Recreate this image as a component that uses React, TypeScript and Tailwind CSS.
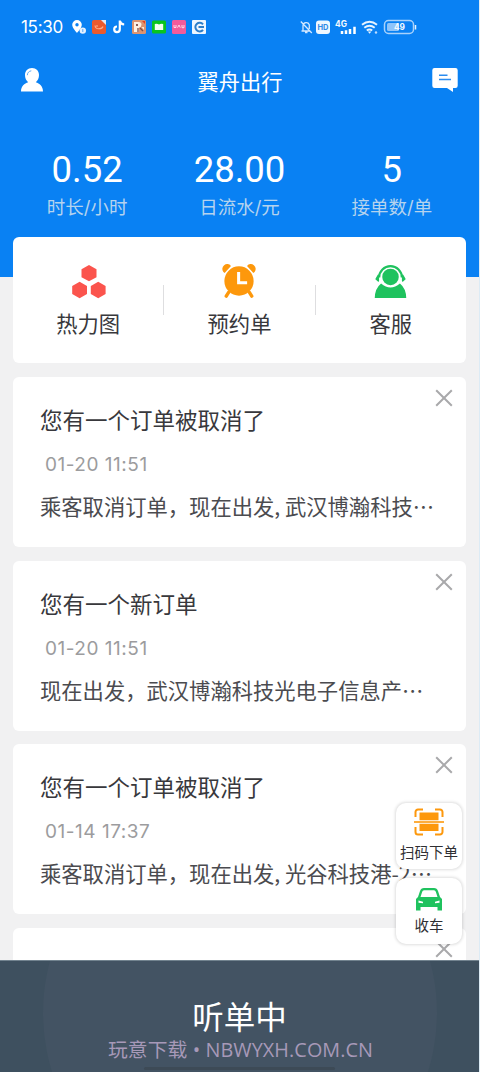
import type { ReactNode } from 'react';

interface Order {
  title: string;
  time: string;
  text: string;
}

const orders: Order[] = [
  { title: '您有一个订单被取消了', time: '01-20 11:51', text: '乘客取消订单，现在出发, 武汉博瀚科技…' },
  { title: '您有一个新订单', time: '01-20 11:51', text: '现在出发，武汉博瀚科技光电子信息产…' },
  { title: '您有一个订单被取消了', time: '01-14 17:37', text: '乘客取消订单，现在出发, 光谷科技港-2…' },
];

const stats = [
  { value: '0.52', label: '时长/小时' },
  { value: '28.00', label: '日流水/元' },
  { value: '5', label: '接单数/单' },
];

function StatusBar() {
  return (
    <div className="flex h-[54px] items-center pl-[21px] pr-[62px] text-white">
      <span className="w-[51px] text-[17px] leading-5 tracking-[-0.3px]">15:30</span>
      <div className="flex items-center gap-[6px]">
        {/* Location */}
        <svg width="14" height="14" viewBox="0 0 14 14">
          <path d="M5 0a4.8 4.8 0 0 0-4.8 4.8C.2 8 5 13 5 13s4.8-5 4.8-8.2A4.8 4.8 0 0 0 5 0z" fill="#fff" />
          <circle cx="5" cy="4.8" r="1.7" fill="#0b81f2" />
          <circle cx="10.8" cy="10.6" r="3.2" fill="#e4f1ff" />
          <path d="M10.8 9v3" stroke="#5aa9f5" strokeWidth="1" />
        </svg>
        {/* Orange app */}
        <svg width="14" height="14" viewBox="0 0 14 14">
          <rect width="14" height="14" rx="2" fill="#ea5a2d" />
          <path d="M9 0h5v5z" fill="#dfeaf5" />
          <path d="M3 5.500q.5 3.500 4 3.300t4-2.300M4 6h2" stroke="#ffb08a" strokeWidth="1.100" fill="none" />
        </svg>
        {/* Music note */}
        <svg width="14" height="14" viewBox="0 0 14 14">
          <path d="M7.800 .5v8.800a2.800 2.800 0 1 1-2.800-2.800M7.800 .8c.4 2.400 2 3.500 4.400 3.700" stroke="#fff" strokeWidth="2.200" fill="none" />
        </svg>
        {/* Picture app */}
        <svg width="14" height="14" viewBox="0 0 14 14">
          <rect width="14" height="14" rx="1.500" fill="#dd9470" />
          <path d="M2 2h4.500q3 0 3 2.500T7 7.500V12H2z" fill="#fff1e2" />
          <path d="M4 4h2v2H4z" fill="#8d5d55" />
          <path d="M8 8l3 3M6 8v4" stroke="#7d4e48" strokeWidth="1.300" />
          <path d="M10 1h3v3z" fill="#e8431f" />
          <path d="M9.500 7H12v3z" fill="#ffe9d5" />
        </svg>
        {/* Green reader */}
        <svg width="14" height="14" viewBox="0 0 14 14">
          <rect y=".5" width="14" height="13" rx="1.500" fill="#09c51f" />
          <path d="M2.800 4q2.200-.8 4.200.4 2-1.200 4.200-.4v6H2.800z" fill="#f2fff2" />
        </svg>
        {/* Pink app */}
        <svg width="14" height="14" viewBox="0 0 14 14">
          <rect width="14" height="14" rx="1.500" fill="#f25b9b" />
          <path d="M2 5v2.500h2V5m1.500 2.700L7 5l1.300 2.700M10 5v2.700h2V5" stroke="#ffd7e8" strokeWidth="1" fill="none" />
        </svg>
        {/* Blue ring app */}
        <svg width="14" height="14" viewBox="0 0 14 14">
          <rect width="14" height="14" rx="1" fill="#eef6ff" />
          <path d="M11 4.400A4.300 4.300 0 1 0 11 9.800M6.500 7H12" stroke="#2c7ec9" strokeWidth="2" fill="none" />
        </svg>
      </div>

      <div className="ml-auto flex items-center">
        <svg width="117" height="16" viewBox="0 0 117 16" fill="none">
          {/* Muted bell */}
          <path d="M1.500 12h8.800M3 11.500V6.500a3.300 3.300 0 0 1 6.300-.8V10M5 13.500h2.500M.8 2.500l11 11.500" stroke="#d3e8ff" strokeWidth="1.300" />
          {/* HD badge */}
          <rect x="16" y="1.500" width="14" height="13.500" rx="3" fill="#eef7ff" />
          <text x="17.500" y="11.300" fontSize="8" fontWeight="700" fill="#2f8ae6" textLength="11" lengthAdjust="spacingAndGlyphs">HD</text>
          {/* Signal */}
          <text x="35" y="7.500" fontSize="8.500" fontWeight="700" fill="#f3f9ff" textLength="12" lengthAdjust="spacingAndGlyphs">4G</text>
          <path d="M42 15v-3M46 15v-3.800M50 15v-5M54.500 15V7.800" stroke="#fff" strokeWidth="2.500" />
          {/* Wifi */}
          <path d="M62 5.800q7.500-6 15 0M64.300 8.700q5.200-4 10.400 0M66.800 11.500q2.700-2 5.400 0" stroke="#e6f3ff" strokeWidth="2" />
          <path d="M67.800 12.600h3.600l-1.800 2.200z" fill="#e6f3ff" />
          <circle cx="76" cy="13.500" r="1.200" fill="#bcdcff" />
          {/* Battery */}
          <rect x="84.500" y="1.500" width="29" height="13" rx="4" stroke="#a9d2fb" strokeWidth="1.500" />
          <rect x="87" y="4" width="12" height="8" rx="1.500" fill="#8fc4fa" />
          <path d="M115.500 6v4.500" stroke="#e6f3ff" strokeWidth="1.500" />
          <text x="94" y="11.300" fontSize="9" fontWeight="700" fill="#f4faff" textLength="11" lengthAdjust="spacingAndGlyphs">49</text>
        </svg>
      </div>
    </div>
  );
}

function CloseIcon() {
  return (
    <svg width="18" height="18" viewBox="0 0 18 18" className="absolute right-[13px] top-3">
      <path d="M1.200 1.200l15.600 15.600M16.800 1.200L1.200 16.800" stroke="#a9a9ab" strokeWidth="2" />
    </svg>
  );
}

function OrderCard({ order }: { order: Order }) {
  return (
    <article className="relative h-[170px] flex-none rounded-md bg-white pl-[27px] pt-[27px]">
      <CloseIcon />
      <h2 className="text-[22.500px] leading-[34px] text-[#38383c]">{order.title}</h2>
      <p className="ml-[5px] mt-3 text-[19px] leading-[30px] tracking-[0.520px] text-[#9c9c9e]">{order.time}</p>
      <p className="mt-[10px] whitespace-nowrap font-['Noto_Sans_CJK_SC',sans-serif] text-[21.300px] leading-8 text-[#4b4b4f]">
        {order.text}
      </p>
    </article>
  );
}

function Shortcut({ label, children }: { label: string; children: ReactNode }) {
  return (
    <button className="flex flex-1 flex-col items-center pt-[26px]">
      <span className="flex h-9 items-center">{children}</span>
      <span className="mt-[9px] text-[21.300px] leading-8 text-[#38383c]">{label}</span>
    </button>
  );
}

function FloatButton({ label, children }: { label: string; children: ReactNode }) {
  return (
    <button className="flex h-[66px] w-[66px] flex-col items-center rounded-[10px] bg-white shadow-[0_0_3px_1px_rgba(0,0,0,0.13)]">
      {children}
      <span className="whitespace-nowrap text-[14.500px] leading-5 text-[#2f2f33]">{label}</span>
    </button>
  );
}

export default function App() {
  return (
    <div
      lang="zh-CN"
      className="relative flex h-[1072px] w-[480px] flex-col overflow-hidden border-r border-[#dcebf5] bg-[#f1f1f2] font-['Inter','Noto_Sans_CJK_SC',sans-serif]"
    >
      {/* Header */}
      <header className="h-[277px] flex-none bg-[#0981f3] text-white">
        <StatusBar />
        <div className="flex h-[52px] items-center justify-between pl-[21px] pr-[21px]">
          <svg width="22" height="24" viewBox="0 0 22 24">
            <path d="M11 0C6.700 0 4 3 4 7c0 3 1.200 5.700 3.200 7.200C3.500 15.300 0 18 0 23.500h22c0-5.500-3.500-8.200-7.200-9.300C16.800 12.700 18 10 18 7c0-4-2.700-7-7-7z" fill="#fff" />
            <path d="M6.300 7.200C6.500 4.500 8 3.200 10.300 2.800" stroke="#5cabf7" strokeWidth="1" fill="none" />
          </svg>
          <h1 className="ml-[5px] mt-[3px] text-[21.200px] leading-8">翼舟出行</h1>
          <svg width="26" height="24" viewBox="0 0 26 24">
            <path d="M2.500 0h21A2.200 2.200 0 0 1 25.700 2.200v15.600A2.200 2.200 0 0 1 23.500 20H21v4l-6-4H2.500A2.200 2.200 0 0 1 .3 17.800V2.200A2.200 2.200 0 0 1 2.500 0z" fill="#fff" />
            <path d="M7 7.300h8.500M7 11.500h12" stroke="#2a8cf0" strokeWidth="1.600" />
          </svg>
        </div>
        <div className="mx-[11px] mt-[43px] flex">
          {stats.map((item) => (
            <div key={item.label} className="flex flex-1 flex-col items-center">
              <span className="font-['Roboto',sans-serif] text-[36.500px] leading-[42px]">{item.value}</span>
              <span className="mt-[2px] text-[18.500px] leading-7 text-[#b5d3ee]">{item.label}</span>
            </div>
          ))}
        </div>
      </header>

      <main className="-mt-10 flex min-h-0 flex-1 flex-col gap-[13.800px] overflow-hidden px-[13px]">
        {/* Shortcuts */}
        <section className="flex h-[126px] flex-none items-start rounded-md bg-white">
          <Shortcut label="热力图">
            <svg width="36" height="36" viewBox="0 0 36 36" fill="#fb544d" className="ml-px">
              <path d="M18 2l7.500 4.200v8L18 18.300l-7.500-4.100v-8zM8.600 18.800l7.400 4.100v8.100l-7.400 4.200L1.200 31v-8.100zM27.200 18.800l7.400 4.100v8.100l-7.400 4.200-7.400-4.200v-8.100z" />
            </svg>
          </Shortcut>
          <span className="mt-12 h-[30px] w-px bg-[#dedee0]" />
          <Shortcut label="预约单">
            <svg width="34" height="34" viewBox="0 0 36 36" fill="none">
              <path d="M7 30l-2.500 4M29 30l2.500 4" stroke="#fd980c" strokeWidth="3.600" strokeLinecap="round" />
              <path d="M1.500 8.500a5 5 0 0 1 8-6.500L2.800 9.500zM34.500 8.500a5 5 0 0 0-8-6.500l6.700 7.500z" fill="#fd980c" />
              <circle cx="18" cy="18" r="15.500" fill="#fd980c" />
              <path d="M17.600 8.500v11.300h9" stroke="#fff" strokeWidth="3.200" />
            </svg>
          </Shortcut>
          <span className="mt-12 h-[30px] w-px bg-[#dedee0]" />
          <Shortcut label="客服">
            <svg width="35" height="35" viewBox="0 0 36 36" fill="none">
              <path d="M6.300 14a11.700 11.700 0 0 1 23.400 0" stroke="#1fc25e" strokeWidth="2.300" />
              <path d="M5.500 11.500v6l-2.300-2zM30.500 11.500v6l2.300-2z" fill="#1fc25e" stroke="#1fc25e" strokeWidth="1.500" strokeLinejoin="round" />
              <circle cx="18" cy="13.300" r="8.500" fill="#1fc25e" />
              <path d="M8.300 20q9.700 8.500 19.400 0 6.300 5 6.500 15H1.800q.2-10 6.500-15z" fill="#1fc25e" />
            </svg>
          </Shortcut>
        </section>

        {orders.map((order, index) => (
          <OrderCard key={index} order={order} />
        ))}
        <article className="relative h-[170px] flex-none rounded-md bg-white">
          <CloseIcon />
        </article>
      </main>

      {/* Listening bar */}
      <footer className="relative flex h-[112px] flex-none flex-col items-center overflow-hidden border-t border-[#72838f] bg-[#3e505f]">
        <div className="absolute -top-[145px] left-[43px] h-[394px] w-[394px] rounded-full bg-[#435363]" />
        <strong className="relative mt-[34px] text-[31.500px] font-normal leading-[46px] text-white">听单中</strong>
        <p className="relative -mt-[5px] ml-[2px] whitespace-pre font-['Open_Sans','Noto_Sans_CJK_SC',sans-serif] text-[19.800px] leading-7 tracking-[0.100px] text-[#a799b8]">
          玩意下载 • NBWYXH.COM.CN
        </p>
        <span className="absolute bottom-[2px] h-[3px] w-[191px] rounded-full bg-[#3d4a56]" />
      </footer>

      {/* Floating actions */}
      <div className="absolute left-[396px] top-[803px] flex flex-col gap-[9px]">
        <FloatButton label="扫码下单">
          <svg width="30" height="28" viewBox="0 0 30 28" fill="none" className="mb-[7px] mt-[5px] flex-none">
            <path d="M1.500 9V4a2.500 2.500 0 0 1 2.500-2.500h5M21 1.500h5A2.500 2.500 0 0 1 28.500 4v5M1.500 19v5A2.500 2.500 0 0 0 4 26.500h5M21 26.500h5a2.500 2.500 0 0 0 2.500-2.500v-5" stroke="#fd980c" strokeWidth="2" />
            <path d="M5.500 4.500h19v7.700h-19zM5.500 15.800h19v7.200h-19z" fill="#fd980c" />
            <path d="M0 14h30" stroke="#fd980c" strokeWidth="1.600" />
          </svg>
        </FloatButton>
        <FloatButton label="收车">
          <svg width="26" height="23" viewBox="0 0 26 23" className="mb-[5px] mt-[10px] flex-none">
            <path d="M8 0h10q3 0 4 3l2 6 2 2v11.500h-4.500V19h-17v3.500H0V11l2-2 2-6q1-3 4-3zM8 2.300q-1.300 0-1.800 1.500L4.500 9h17l-1.700-5.200q-.5-1.500-1.800-1.500z" fill="#1fc25e" fillRule="evenodd" />
            <path d="M2.500 12.500l4.500 1.300v1.500l-4.500-.5zM23.500 12.500L19 13.800v1.500l4.500-.5z" fill="#fff" />
          </svg>
        </FloatButton>
      </div>
    </div>
  );
}
